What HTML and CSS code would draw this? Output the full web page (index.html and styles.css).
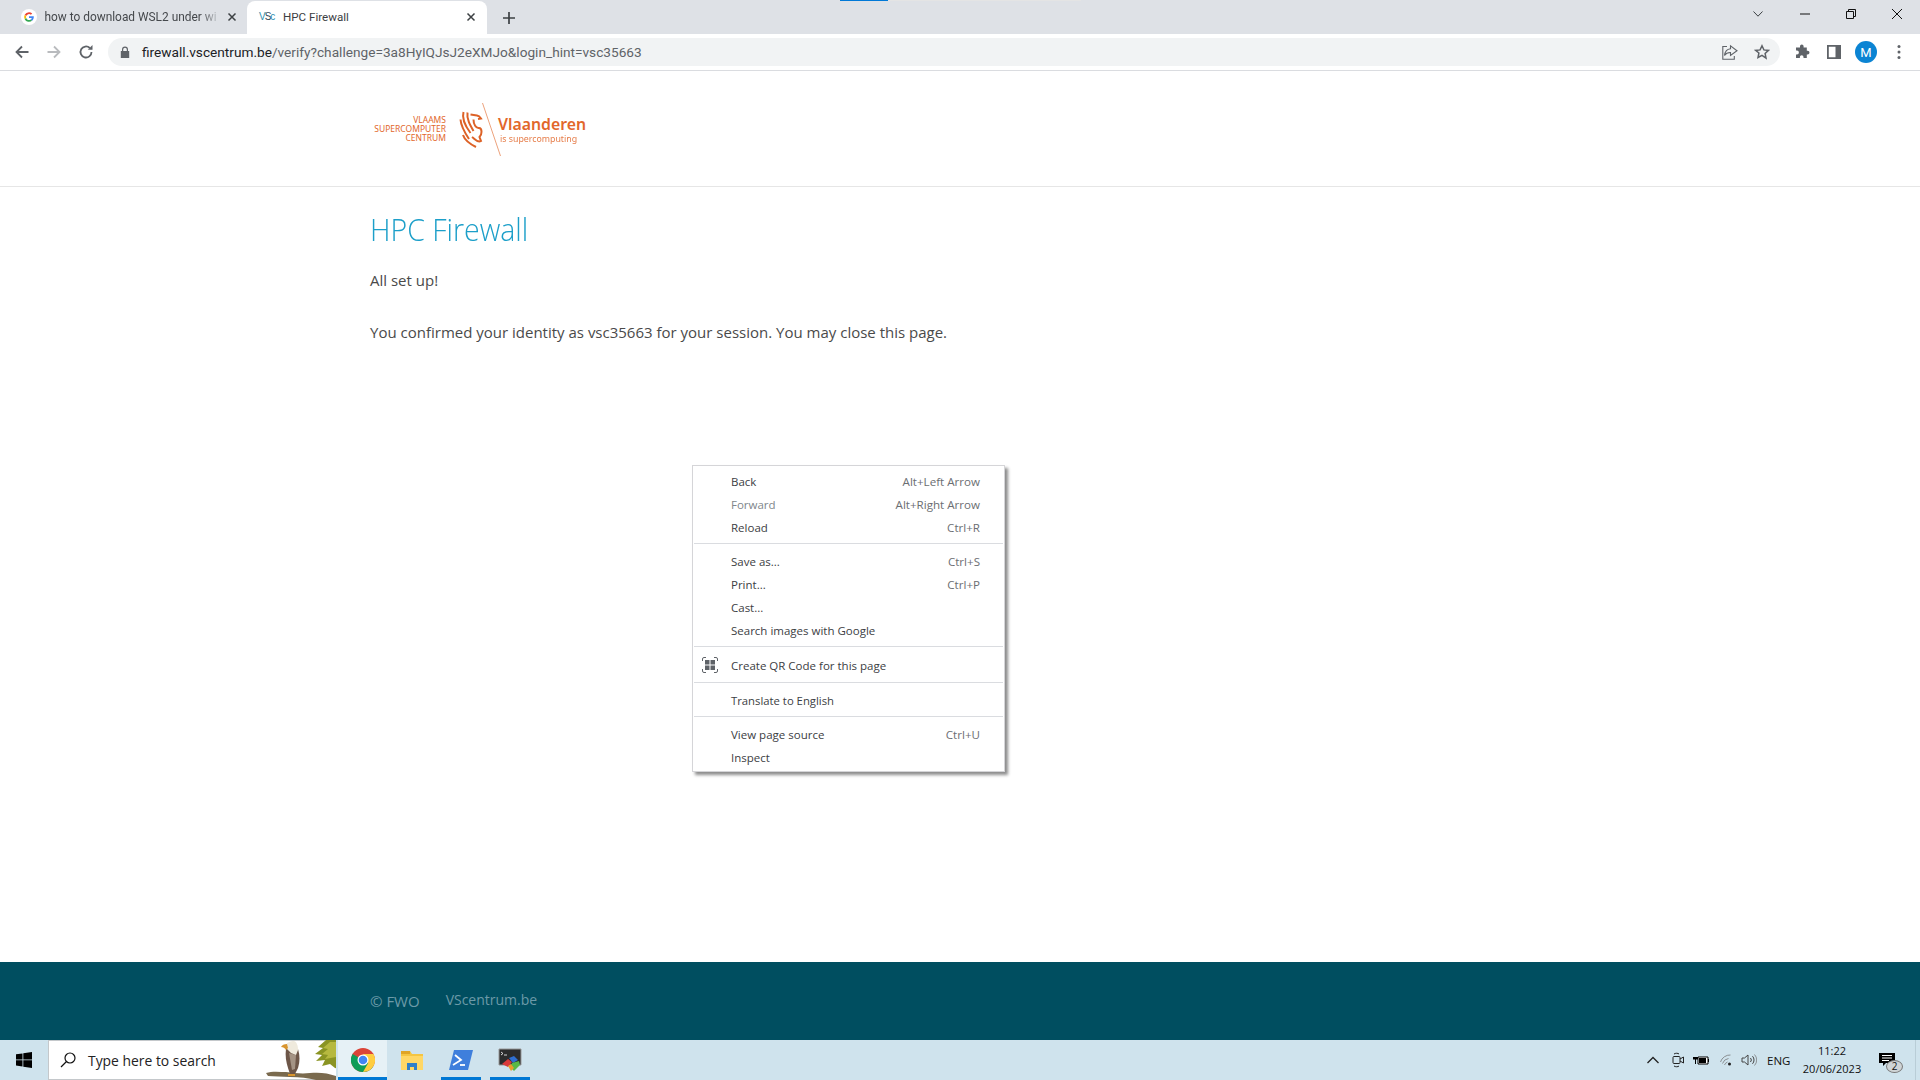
FILE: index.html
```html
<!DOCTYPE html>
<html lang="en">
<head>
<meta charset="utf-8">
<title>HPC Firewall</title>
<link rel="stylesheet" href="styles.css">
</head>
<body>
<div class="screen">
  <header class="chrome">
    <div class="tabstrip">
      <span class="load-bar"></span>
      <div class="tab tab-bg">
        <svg class="favicon" viewBox="0 0 16 16"><circle cx="8" cy="8" r="8" fill="#fff"/><path d="M8 3.200a4.800 4.800 0 0 1 3.200 1.200L9.900 5.700A3 3 0 0 0 5.200 7L3.700 5.800A4.800 4.800 0 0 1 8 3.200z" fill="#ea4335"/><path d="M3.700 5.800 5.200 7a3 3 0 0 0 0 2L3.700 10.200a4.800 4.800 0 0 1 0-4.400z" fill="#fbbc05"/><path d="M3.700 10.200 5.200 9a3 3 0 0 0 4.500 1.600l1.400 1.100A4.800 4.800 0 0 1 3.700 10.200z" fill="#34a853"/><path d="M12.800 8c0 1.500-.6 2.800-1.700 3.700L9.700 10.600A2.300 2.300 0 0 0 10.700 9H8V7.200h4.700c.1.300.1.500.1.800z" fill="#4285f4"/></svg>
        <span class="tab-title fade">how to download WSL2 under wi</span>
        <svg class="tab-x" viewBox="0 0 10 10"><path d="M1.500 1.500l7 7M8.500 1.500l-7 7"/></svg>
      </div>
      <div class="tab tab-active">
        <span class="vsc-mark">V<b>S</b>c</span>
        <span class="tab-title">HPC Firewall</span>
        <svg class="tab-x" viewBox="0 0 10 10"><path d="M1.500 1.500l7 7M8.500 1.500l-7 7"/></svg>
      </div>
      <svg class="new-tab" viewBox="0 0 12 12"><path d="M6 0v12M0 6h12"/></svg>
      <div class="win-controls">
        <svg class="tab-search" viewBox="0 0 10 6"><path d="M.5.500 5 5.200 9.500.500"/></svg>
        <svg class="win-btn" viewBox="0 0 12 12"><path d="M1 6h10"/></svg>
        <svg class="win-btn" viewBox="0 0 12 12"><path d="M1.500 3.500h7v7h-7zM3.500 3.500v-2h7v7h-2"/></svg>
        <svg class="win-btn" viewBox="0 0 12 12"><path d="M1 1l10 10M11 1L1 11"/></svg>
      </div>
    </div>
    <div class="toolbar">
      <svg class="nav" viewBox="0 0 16 16"><path d="M14.500 8H2.500M8 2.500 2.500 8 8 13.500"/></svg>
      <svg class="nav nav-off" viewBox="0 0 16 16"><path d="M1.500 8h12M8 2.500 13.500 8 8 13.500"/></svg>
      <svg class="nav" viewBox="0 0 16 16"><path d="M13.500 8A5.500 5.500 0 1 1 11.800 4"/><path class="solid" d="M9.800 5.800h4.700V1z"/></svg>
      <div class="omnibox">
        <svg class="lock" viewBox="0 0 10 12"><path d="M2 5V3.500a3 3 0 0 1 6 0V5h1.200v7H.8V5zm1.200 0h3.600V3.500a1.800 1.800 0 0 0-3.600 0z"/></svg>
        <span class="url"><span class="host">firewall.vscentrum.be</span>/verify?challenge=3a8HyIQJsJ2eXMJo&amp;login_hint=vsc35663</span>
        <svg class="omni-icon share" viewBox="0 0 16 16"><path d="M8.500 4.800V1.800L15 6.800l-6.500 4.600V8.500C5.500 8.400 3.800 9.500 2.500 11.500 3 7.500 5 5.200 8.500 4.800zM5 2.500H.8v12.700h11.500V12"/></svg>
        <svg class="omni-icon star" viewBox="0 0 16 16"><path d="M8 1.800l1.900 4.100 4.500.5-3.300 3.100.9 4.500L8 11.300l-4 2.200.9-4.500L1.600 6.400l4.500-.5z"/></svg>
      </div>
      <svg class="tool puzzle" viewBox="0 0 16 16"><path d="M6 2.200a1.800 1.800 0 0 1 3.600 0V3.500h3.200v3.200h.8a1.900 1.900 0 0 1 0 3.800h-.8V14H9.500v-1a1.800 1.800 0 0 0-3.600 0v1H2v-3.600h1a1.900 1.900 0 0 0 0-3.800H2V3.500h4z"/></svg>
      <svg class="tool panel" viewBox="0 0 14 14"><path fill-rule="evenodd" d="M0 0h14v14H0zM1.800 1.800v10.400h6.700V1.800z"/></svg>
      <span class="avatar">M</span>
      <svg class="tool dots" viewBox="0 0 4 16"><circle cx="2" cy="2.500" r="1.500"/><circle cx="2" cy="8" r="1.500"/><circle cx="2" cy="13.500" r="1.500"/></svg>
    </div>
  </header>

  <main class="page">
    <div class="site-header">
      <div class="wrap logo-wrap">
        <div class="logo">
          <div class="logo-left"><span>VLAAMS</span><span>SUPERCOMPUTER</span><span>CENTRUM</span></div>
          <svg class="lion" viewBox="0 0 24 37"><path d="M4.500 1C2.500 8 7 16 11.500 22M8.500 1.500C7.500 8 11 14 14.500 20M1.500 8.500C2 16 6 22 10 28M4 24c2 6 7 9 13 12"/><path d="M11.500 3.500 18 4.500c2 .3 3 1.500 4 3l-3 .5M14.500 8.500c0 5 2.500 9 5.500 8.500 3.500 0 3 7 .5 9l1.500 4c-3.500 2-5.500-1.500-9-4"/></svg>
          <svg class="slash" viewBox="0 0 19 53"><path d="M.5 0l18 53"/></svg>
          <div class="logo-right"><span class="vl">Vlaanderen</span><span class="sc">is supercomputing</span></div>
        </div>
      </div>
    </div>
    <div class="wrap content">
      <h1>HPC Firewall</h1>
      <p>All set up!</p>
      <p class="second">You confirmed your identity as vsc35663 for your session. You may close this page.</p>
    </div>
    <div class="menu">
      <div class="mi"><span>Back</span><span class="sc-key">Alt+Left Arrow</span></div>
      <div class="mi off"><span>Forward</span><span class="sc-key">Alt+Right Arrow</span></div>
      <div class="mi"><span>Reload</span><span class="sc-key">Ctrl+R</span></div>
      <div class="sep"></div>
      <div class="mi"><span>Save as...</span><span class="sc-key">Ctrl+S</span></div>
      <div class="mi"><span>Print...</span><span class="sc-key">Ctrl+P</span></div>
      <div class="mi"><span>Cast...</span></div>
      <div class="mi"><span>Search images with Google</span></div>
      <div class="sep"></div>
      <div class="mi mi-tall">
        <svg class="qr" viewBox="0 0 16 16"><path class="qr-f" d="M.5 4V2A1.500 1.500 0 0 1 2 .5h2M12 .5h2A1.500 1.500 0 0 1 15.500 2v2M15.500 12v2a1.500 1.500 0 0 1-1.500 1.500h-2M4 15.500H2A1.500 1.500 0 0 1 .5 14v-2"/><path class="qr-s" d="M3 3h4.500v4.500H3zM8.500 3H13v4.500H8.500zM3 8.500h4.500V13H3zM8.500 8.500H13V13H8.500z"/></svg>
        <span>Create QR Code for this page</span>
      </div>
      <div class="sep"></div>
      <div class="mi"><span class="tr-en">Translate to English</span></div>
      <div class="sep"></div>
      <div class="mi"><span>View page source</span><span class="sc-key">Ctrl+U</span></div>
      <div class="mi"><span>Inspect</span></div>
    </div>
  </main>

  <footer class="site-footer">
    <div class="wrap foot-row"><span class="fwo">© FWO</span><span class="vs">VScentrum.be</span></div>
  </footer>

  <div class="taskbar">
    <div class="start"><svg viewBox="0 0 16 16"><path d="M0 2.300 6.500 1.400V7.500H0zM7.300 1.300 16 0V7.500H7.300zM0 8.300h6.500v6.200L0 13.600zM7.300 8.300H16V16L7.300 14.700z"/></svg></div>
    <div class="search">
      <svg class="mag" viewBox="0 0 16 16"><circle cx="10" cy="6" r="5"/><path d="M6.500 9.500 1 15"/></svg>
      <span>Type here to search</span>
      <svg class="eagle" viewBox="0 0 70 40">
        <path class="tree-d" d="M70 0H60l-8 7 5 1-8 6 7 1-6 6 9-1-3 6 8-2 5 4 11 2z"/>
        <path class="tree-l" d="M70 2h-6l-7 6 5 1-6 5 6 1-3 4 11-2z"/>
        <path class="branch" d="M0 33c6-2 14-1 20-1 8 1 16 2 24 1 9-1 18 0 26 3v4H50c-8-2-16-3-26-3-8 0-16-1-22-1z"/>
        <path class="body" d="M20 9h12c2 6 2 13 0 19l-3 6h-5l-2-6c-2-6-3-13-2-19z"/>
        <path class="wing" d="M23 13l3 17 3-1 1-14z"/>
        <path class="head" d="M20 5c1-3 5-4 8-4 3 1 4 5 4 9l-2 5-5-2-4-4z"/>
        <path class="beak" d="M15 7c1-2 3-3 6-3l1 4-2 2c-1-2-3-3-5-3z"/>
        <path class="beak" d="M22 34h7v2h-7z"/>
      </svg>
    </div>
    <div class="task task-on underline">
      <svg viewBox="0 0 24 24"><circle cx="12" cy="12" r="12" fill="#db4437"/><path d="M12 12 22.400 18A12 12 0 0 1 1.600 18 12 12 0 0 1 1.600 6z" fill="#0f9d58"/><path d="M12 6h10.400A12 12 0 0 1 12 24L17.200 15z" fill="#ffcd40"/><circle cx="12" cy="12" r="5.500" fill="#fff"/><circle cx="12" cy="12" r="4.300" fill="#4285f4"/></svg>
    </div>
    <div class="task">
      <svg viewBox="0 0 24 24"><path d="M1 3h9l2 3h11v16H1z" fill="#f5c542"/><path d="M1 3h9v3H1z" fill="#e0a526"/><path d="M1 8h22v14H1z" fill="#ffd766"/><path d="M7 15h10v7h-3v-3h-4v3H7z" fill="#2f7fc9"/></svg>
    </div>
    <div class="task underline">
      <svg viewBox="0 0 24 24"><path d="M5 2h19l-5 20H0z" fill="#3f7fdc"/><path d="M6 7l6 5-8 5" fill="none" stroke="#fff" stroke-width="1.800"/><path d="M11 17h5" stroke="#fff" stroke-width="1.800"/></svg>
    </div>
    <div class="task underline">
      <svg viewBox="0 0 24 24"><path d="M1 1h22v16H1z" fill="#2b2b2b" stroke="#999"/><path d="M3 4l2 1.500L3 7M6 7h3" stroke="#fff" fill="none" stroke-width=".8"/><path d="M4 16l6-5 4 3-4 5z" fill="#d93a3a"/><path d="M11 10l5-2 4 4-5 3z" fill="#2f6ed0"/><path d="M14 15l7-2 1 4-6 6-4-4z" fill="#58b947"/><path d="M10 18l3-2 3 4-3 3z" fill="#eb9c2c"/></svg>
    </div>
    <div class="tray">
      <svg class="tr chev" viewBox="0 0 12 8"><path d="M.5 7 6 1.500 11.500 7"/></svg>
      <svg class="tr meet" viewBox="0 0 12 16"><rect x="1" y="4.500" width="7" height="7" rx="1"/><path d="M8 7l3.500-2v6L8 9M2 2c1.500-1 4-1 5 0M2 14c1.500 1 4 1 5 0"/></svg>
      <svg class="batt" viewBox="0 0 16 9"><path class="batt-body" d="M5 1h10v7H5z"/><path class="batt-fill" d="M6 2h7v5H6zM15 3h1v3h-1zM0 1h5v2.500H3V8H2V3.500H0z"/></svg>
      <svg class="tr wifi" viewBox="0 0 13 12"><path d="M.5 8a10 10 0 0 1 10-7M2.500 9.500a7.500 7.500 0 0 1 6-5M4.500 11a5 5 0 0 1 3-3"/><circle class="dot" cx="9.500" cy="10" r="1.500"/></svg>
      <svg class="tr vol" viewBox="0 0 16 14"><path d="M1 5h2.500L7 2v10L3.500 9H1zM9.500 5a3 3 0 0 1 0 4M11.500 3.200a5.500 5.500 0 0 1 0 7.600"/><path class="vol-far" d="M13.500 1.500a8 8 0 0 1 0 11"/></svg>
      <span class="lang">ENG</span>
      <div class="clock"><span>11:22</span><span>20/06/2023</span></div>
      <div class="notif">
        <svg viewBox="0 0 16 13"><path d="M0 0h16v10H7L4 13v-3H0z"/><path d="M3 2.500h10M3 5h10M3 7.500h7" stroke="#fff" fill="none"/></svg>
        <span class="badge">2</span>
      </div>
      <span class="desk-line"></span>
    </div>
  </div>
</div>
</body>
</html>
```
FILE: styles.css
```css
* { box-sizing: border-box; }
html, body { margin: 0; padding: 0; height: 100%; overflow: hidden; }
body { font-family: "Open Sans", "Noto Sans", sans-serif; background: #fff; }
svg { display: block; flex: none; }
.screen { width: 1920px; height: 1080px; display: flex; flex-direction: column; }

/* chrome */
.chrome { height: 71px; flex: none; display: flex; flex-direction: column; font-family: "Roboto", "Liberation Sans", sans-serif; }
.tabstrip { height: 34px; background: #dee1e6; display: flex; align-items: flex-end; padding-left: 8px; position: relative; }
.load-bar { position: absolute; left: 840px; top: 0; width: 241px; height: 1px; background: linear-gradient(90deg, #0078d7 48px, #e4e4e4 48px); }
.tab { height: 33px; width: 240px; display: flex; align-items: center; font-size: 11.600px; color: #45484c; padding: 0 8px 2px 13px; }
.tab-bg { font-size: 11.900px; }
.tab-active { background: #fff; border-radius: 8px 8px 0 0; margin-left: -1px; color: #3c4043; padding-left: 12px; }
.tab-title { flex: 1; overflow: hidden; white-space: nowrap; margin-left: 7.500px; }
.tab-active .tab-title { margin-left: 8px; }
.fade { -webkit-mask-image: linear-gradient(90deg, #000 155px, transparent 176px); mask-image: linear-gradient(90deg, #000 155px, transparent 176px); }
.favicon { width: 16px; height: 16px; }
.vsc-mark { width: 16px; font-size: 10px; font-family: "Liberation Sans", sans-serif; color: #2d8fb0; letter-spacing: -1px; white-space: nowrap; }
.vsc-mark b { font-weight: 400; color: #33495a; }
.tab-x { width: 10px; height: 10px; fill: none; stroke: #3c4043; stroke-width: 1.500; margin-right: 3px; }
.new-tab { width: 12px; height: 12px; fill: none; stroke: #3c4043; stroke-width: 1.700; margin: 0 0 10px 16px; }
.win-controls { margin-left: auto; height: 34px; display: flex; align-items: center; padding-bottom: 6px; }
.tab-search { width: 10px; height: 6px; fill: none; stroke: #3c4043; stroke-width: 1; margin-right: 36px; }
.win-btn { width: 12px; height: 12px; fill: none; stroke: #111; stroke-width: 1; margin-right: 34px; }
.win-btn:last-child { margin-right: 17px; }

.toolbar { height: 37px; background: #fff; border-bottom: 1px solid #dadce0; display: flex; align-items: center; padding-left: 14px; }
.nav { width: 16px; height: 16px; fill: none; stroke: #5f6368; stroke-width: 1.800; margin-right: 16px; }
.nav:nth-child(3) { margin-right: 14px; }
.nav-off { stroke: #b9bbbe; }
.nav .solid { fill: #5f6368; stroke: none; }
.omnibox { width: 1672px; height: 28px; background: #f1f3f4; border-radius: 14px; display: flex; align-items: center; padding: 0 10px 0 12px; margin-right: 14px; }
.lock { width: 10px; height: 12px; fill: #5f6368; }
.url { margin-left: 12px; font-size: 13.670px; color: #5f6368; flex: 1; white-space: nowrap; }
.host { color: #202124; }
.omni-icon { width: 16px; height: 16px; fill: none; stroke: #5f6368; stroke-width: 1.100; margin-left: 16px; }
.star { stroke-width: 1.500; }
.tool { fill: #5f6368; }
.puzzle { width: 16px; height: 16px; margin-right: 17px; }
.panel { width: 14px; height: 14px; margin-right: 14px; }
.avatar { width: 22px; height: 22px; border-radius: 50%; background: #0b84d3; color: #fff; font-size: 13px; display: flex; align-items: center; justify-content: center; margin-right: 20px; }
.dots { width: 4px; height: 16px; }

/* page */
.page { flex: 1; position: relative; min-height: 0; color: #4a4a4a; }
.wrap { width: 1180px; margin-left: 370px; }
.site-header { height: 116px; border-bottom: 1px solid #e6e6e6; }
.logo-wrap { height: 100%; }
.logo { display: flex; align-items: center; height: 100%; padding-top: 2px; color: #e2672b; font-family: "Noto Sans", sans-serif; }
.logo-left { display: flex; flex-direction: column; align-items: flex-end; font-size: 8.500px; line-height: 8.800px; width: 76px; white-space: nowrap; }
.lion { width: 24px; height: 37px; margin-left: 13px; fill: none; stroke: #dd6227; stroke-width: 2; }
.slash { width: 19px; height: 53px; margin-left: -1px; fill: none; stroke: #eca27c; stroke-width: 1; }
.logo-right { display: flex; flex-direction: column; margin-left: -3px; }
.vl { font-size: 15.800px; line-height: 19px; font-weight: 600; }
.sc { font-size: 8.800px; line-height: 11px; margin-left: 2px; opacity: .85; white-space: nowrap; }
.content h1 { font-family: "Open Sans", sans-serif; font-weight: 300; font-size: 32px; line-height: 44px; color: #1c9fc9; margin: 20px 0 0; transform-origin: left; transform: scaleX(.89); }
.content p { margin: 16px 0 0; font-size: 15px; line-height: 26px; color: #4a4a4a; }
.content .second { margin-top: 26px; }

.menu { position: absolute; left: 692px; top: 394px; width: 313px; height: 307px; background: #fff; border: 1px solid #d5d5d8; box-shadow: 3px 3px 3px rgba(0,0,0,.45); padding: 4px 0; font-family: "Open Sans", sans-serif; font-size: 11.500px; color: #3c4043; }
.mi { height: 23px; display: flex; align-items: center; justify-content: space-between; padding: 0 24px 0 38px; position: relative; }
.mi-tall { height: 25px; }
.off { color: #80868b; }
.sc-key { color: #6b6e72; font-size: 11.600px; margin-top: -1px; }
.tr-en { font-size: 11.300px; }
.sep { height: 1px; background: #dadce0; margin: 4px 1px 6px; }
.qr { position: absolute; left: 9px; top: 4px; width: 16px; height: 16px; }
.qr-f { fill: none; stroke: #5f6368; stroke-width: 1; }
.qr-s { fill: #5f6368; }

/* footer */
.site-footer { height: 78px; flex: none; background: #004e60; color: #6c9aa8; font-size: 14px; }
.foot-row { display: flex; height: 100%; align-items: center; font-family: "Open Sans", sans-serif; }
.fwo { margin-top: 0; margin-right: 26px; font-size: 15px; }
.vs { margin-top: -4px; }

/* taskbar */
.taskbar { height: 40px; flex: none; background: #cfe3ed; display: flex; align-items: stretch; font-family: "Liberation Sans", sans-serif; }
.start { width: 48px; display: flex; align-items: center; justify-content: center; }
.start svg { width: 16px; height: 16px; fill: #000; }
.search { width: 288px; margin-right: 2px; background: #fff; border: 1px solid #c4c8cb; border-right: 0; display: flex; align-items: center; position: relative; font-size: 13.900px; color: #222; font-family: "Open Sans", sans-serif; }
.mag { width: 16px; height: 16px; margin: 0 12px 0 11px; fill: none; stroke: #111; stroke-width: 1.200; }
.eagle { position: absolute; right: 0; top: -1px; width: 70px; height: 40px; }
.tree-d { fill: #8a9423; }
.tree-l { fill: #b6b93f; }
.branch { fill: #7a6a4e; }
.body { fill: #6d5648; }
.wing { fill: #a49384; }
.head { fill: #efeadd; }
.beak { fill: #d9952f; }
.task { width: 49px; display: flex; align-items: center; justify-content: center; position: relative; }
.task svg { width: 24px; height: 24px; }
.task-on { background: #e6f1f6; }
.underline::after { content: ""; position: absolute; left: 5px; right: 4px; bottom: 0; height: 3px; background: #0078d4; }
.task-on.underline::after { left: 0; right: 0; }
.tray { margin-left: auto; display: flex; align-items: center; color: #111; font-family: "Open Sans", sans-serif; font-size: 11.500px; }
.tr { fill: none; stroke: #222; stroke-width: 1; }
.chev { width: 12px; height: 8px; margin-right: 13px; stroke-width: 1.300; }
.meet { width: 12px; height: 16px; margin-right: 9px; }
.batt { width: 16px; height: 9px; margin-right: 11px; }
.batt-body { fill: #fff; stroke: #000; stroke-width: 1; }
.batt-fill { fill: #000; }
.wifi { width: 13px; height: 12px; margin-right: 8px; stroke: #8a8f92; }
.wifi .dot { fill: #222; stroke: none; }
.vol { width: 16px; height: 14px; margin-right: 10px; stroke: #444; }
.vol-far { stroke: #8a8f92; }
.lang { width: 23px; margin-right: 13px; white-space: nowrap; }
.clock { width: 58px; display: flex; flex-direction: column; align-items: center; line-height: 18px; margin-right: 18px; font-size: 11px; white-space: nowrap; }
.notif { width: 24px; height: 30px; position: relative; margin-right: 12px; }
.notif svg { width: 16px; height: 13px; position: absolute; left: 0; top: 8px; fill: #000; }
.badge { position: absolute; left: 7px; top: 15px; width: 17px; height: 13px; border-radius: 50%; background: #cfd4d6; border: 1px solid #777; color: #111; font-size: 10px; line-height: 11px; text-align: center; }
.desk-line { width: 1px; height: 40px; background: #b9cdd7; margin-right: 4px; }
```
